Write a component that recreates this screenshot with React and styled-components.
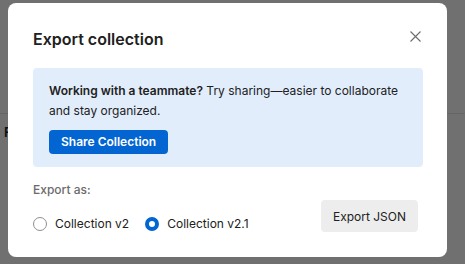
import React from "react";
import styled, { createGlobalStyle } from "styled-components";

const Global = createGlobalStyle`
  html, body { margin: 0; padding: 0; }
  body {
    width: 465px;
    height: 264px;
    overflow: hidden;
    background: #ffffff;
    font-family: Inter, "Noto Sans", "Liberation Sans", sans-serif;
    -webkit-font-smoothing: antialiased;
  }
  * { box-sizing: border-box; }
`;

const Page = styled.div`
  width: 465px;
  height: 264px;
  position: relative;
  background: #ffffff;
`;

const PageHeader = styled.div`
  height: 114px;
  border-bottom: 1px solid #e6e6e6;
`;

const PageLabel = styled.div`
  padding: 8px 0 0 4px;
  font-size: 13px;
  font-weight: 600;
  color: #212121;
  line-height: 20px;
`;

const Overlay = styled.div`
  position: absolute;
  inset: 0;
  background: rgba(0, 0, 0, 0.56);
  padding: 3px 18px 0 8px;
  display: flex;
  align-items: flex-start;
`;

const Modal = styled.div`
  width: 439px;
  height: 254px;
  background: #ffffff;
  border-radius: 8px;
  padding: 24px 24px 0 25px;
  display: flex;
  flex-direction: column;
`;

const Header = styled.div`
  display: flex;
  align-items: flex-start;
  justify-content: space-between;
  height: 24px;
`;

const Title = styled.h2`
  margin: 0;
  font-size: 16px;
  line-height: 24px;
  font-weight: 600;
  color: #212121;
`;

const CloseButton = styled.button`
  width: 20px;
  height: 20px;
  margin: -1px -2px 0 0;
  padding: 0;
  border: none;
  background: transparent;
  display: flex;
  align-items: center;
  justify-content: center;
  color: #6b6b6b;
`;

const Banner = styled.div`
  margin-top: 17px;
  background: #e2edfc;
  border-radius: 4px;
  padding: 13px 16px 13px 16px;
`;

const BannerText = styled.p`
  margin: 0;
  font-size: 12px;
  line-height: 20px;
  color: #212121;
  b { font-weight: 600; }
`;

const PrimaryButton = styled.button`
  margin-top: 9px;
  height: 24px;
  padding: 0 12px;
  border: none;
  border-radius: 4px;
  background: #0265d2;
  color: #ffffff;
  font-family: inherit;
  font-size: 12px;
  font-weight: 600;
  line-height: 24px;
`;

const Footer = styled.div`
  margin-top: 13px;
  display: flex;
  align-items: flex-end;
  justify-content: space-between;
`;

const FormGroup = styled.div`
  display: flex;
  flex-direction: column;
  gap: 14px;
`;

const Label = styled.div`
  font-size: 12px;
  line-height: 20px;
  font-weight: 500;
  color: #6b6b6b;
`;

const RadioGroup = styled.div`
  display: flex;
  align-items: center;
  gap: 16px;
`;

const RadioOption = styled.label`
  display: flex;
  align-items: center;
  gap: 8px;
  font-size: 12px;
  line-height: 20px;
  color: #212121;
`;

const RadioDot = styled.span`
  width: 14px;
  height: 14px;
  border-radius: 50%;
  background: #ffffff;
  border: ${(p) => (p.$checked ? "4px solid #0265d2" : "1px solid #8f8f8f")};
`;

const SecondaryButton = styled.button`
  height: 32px;
  margin: 0 5px 2px 0;
  padding: 0 12px;
  border: none;
  border-radius: 4px;
  background: #ededed;
  color: #212121;
  font-family: inherit;
  font-size: 12px;
  font-weight: 400;
`;

function CloseIcon() {
  return (
    <svg width="11" height="11" viewBox="0 0 11 11" fill="none">
      <path d="M0.5 0.5L10.5 10.5M10.5 0.5L0.5 10.5" stroke="currentColor" strokeWidth="1.1" />
    </svg>
  );
}

export default function App() {
  return (
    <Page>
      <Global />
      <PageHeader />
      <PageLabel>File</PageLabel>
      <Overlay>
        <Modal>
          <Header>
            <Title>Export collection</Title>
            <CloseButton aria-label="Close">
              <CloseIcon />
            </CloseButton>
          </Header>
          <Banner>
            <BannerText>
              <b>Working with a teammate?</b> Try sharing—easier to collaborate and stay organized.
            </BannerText>
            <PrimaryButton>Share Collection</PrimaryButton>
          </Banner>
          <Footer>
            <FormGroup>
              <Label>Export as:</Label>
              <RadioGroup>
                <RadioOption>
                  <RadioDot />
                  Collection v2
                </RadioOption>
                <RadioOption>
                  <RadioDot $checked />
                  Collection v2.1
                </RadioOption>
              </RadioGroup>
            </FormGroup>
            <SecondaryButton>Export JSON</SecondaryButton>
          </Footer>
        </Modal>
      </Overlay>
    </Page>
  );
}
